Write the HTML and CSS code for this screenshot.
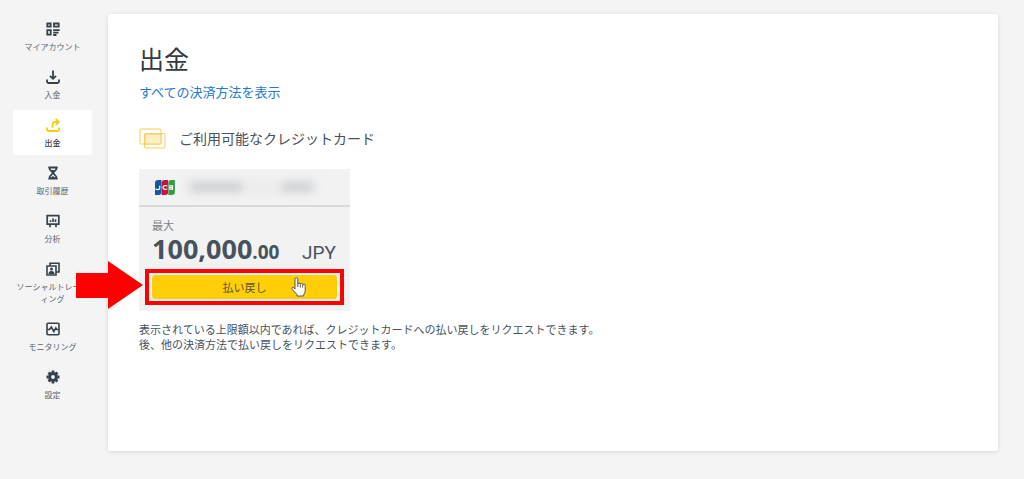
FILE: index.html
```html
<!DOCTYPE html>
<html lang="ja">
<head>
    <meta charset="UTF-8">
    <meta name="viewport" content="width=device-width, initial-scale=1.0">
    <title>出金</title>
    <link rel="stylesheet" href="styles.css">
</head>
<body>
<nav class="sidebar">
    <a class="nav-item" href="#">
        <svg class="nav-icon" viewBox="0 0 14 14" fill="none" stroke="currentColor" stroke-width="1.800">
            <path d="M1.300 1.500h3.400v3.200H1.300zM8 1.500h4.700v3.200H8zM1.300 8.200h3.400v4.400H1.300zM7.200 8.200h6.500M7.200 10.600h5.300M7.200 13h3.300"/>
        </svg>
        <span>マイアカウント</span>
    </a>
    <a class="nav-item" href="#">
        <svg class="nav-icon" viewBox="0 0 14 14" fill="none" stroke="currentColor" stroke-width="1.800">
            <path d="M7 .5v8M4 5.800l3 3 3-3M1 9.500v2q0 1.500 1.500 1.500h9q1.500 0 1.500-1.500v-2"/>
        </svg>
        <span>入金</span>
    </a>
    <a class="nav-item active" href="#">
        <svg class="nav-icon" viewBox="0 0 14 14" fill="none" stroke="currentColor" stroke-width="1.800">
            <path d="M6.500 9.800V7q0-3 3-3h2.500M9.800 1L12.800 4 9.800 7M1 9.500v2q0 1.500 1.500 1.500h9q1.500 0 1.500-1.500v-2"/>
        </svg>
        <span>出金</span>
    </a>
    <a class="nav-item" href="#">
        <svg class="nav-icon" viewBox="0 0 14 14" fill="none" stroke="currentColor" stroke-width="1.800">
            <path d="M2.300 1.500h9.400M2.300 12.700h9.400M3.800 1.500v2L7 7l3.200-3.500v-2M3.800 12.500v-2L7 7l3.200 3.500v2"/>
            <path d="M5 4h4L7 6.500zM4.500 12L7 10 9.500 12z" fill="currentColor" stroke="none"/>
        </svg>
        <span>取引履歴</span>
    </a>
    <a class="nav-item" href="#">
        <svg class="nav-icon" viewBox="0 0 14 14" fill="none" stroke="currentColor" stroke-width="1.700">
            <path d="M1.200 1.700h11.600v8.500H1.200zM4 10v3.300M10 10v3.300M4.500 6.200V8M7 4.500V8M9.500 5.200V8"/>
        </svg>
        <span>分析</span>
    </a>
    <a class="nav-item" href="#">
        <svg class="nav-icon" viewBox="0 0 14 14" fill="none" stroke="currentColor" stroke-width="1.600">
            <path d="M4 3.500V1.200h9v8.800h-2.300M1 4h9v9H1z"/>
            <circle cx="5.500" cy="7" r="1.500" fill="currentColor" stroke="none"/>
            <path d="M2.500 12q0-3 3-3t3 3z" fill="currentColor" stroke="none"/>
        </svg>
        <span>ソーシャルトレーディング</span>
    </a>
    <a class="nav-item" href="#">
        <svg class="nav-icon" viewBox="0 0 14 14" fill="none" stroke="currentColor" stroke-width="1.600">
            <rect x="1" y="1.300" width="12" height="11.500" rx="1"/>
            <path d="M1.500 7.500h2L5.300 5l2.500 4.500 2-3.500 1 1.500h2"/>
        </svg>
        <span>モニタリング</span>
    </a>
    <a class="nav-item" href="#">
        <svg class="nav-icon" viewBox="0 0 14 14" fill="none" stroke="currentColor">
            <circle cx="7" cy="7" r="3.400" stroke-width="3"/>
            <path d="M7 .5v2M7 11.500v2M.5 7h2M11.500 7h2M2.600 2.600l1.400 1.400M10 10l1.400 1.400M11.400 2.600L10 4M4 10l-1.400 1.400" stroke-width="2.800"/>
        </svg>
        <span>設定</span>
    </a>
</nav>

<main class="content">
    <h1>出金</h1>
    <a class="all-methods" href="#">すべての決済方法を表示</a>

    <h2>
        <svg class="cards-icon" viewBox="0 0 27 21" fill="none" stroke="#f5cf5a">
            <rect x="1" y="1" width="21" height="15" rx="1"/>
            <rect x="5.500" y="5.500" width="20.500" height="14.500" rx="1"/>
            <path d="M6 6h16v10H6z" fill="#fff0c4"/>
        </svg>
        ご利用可能なクレジットカード
    </h2>

    <section class="card">
        <div class="card-header">
            <svg class="jcb" viewBox="0 0 20 15" role="img" aria-label="JCB">
                <path d="M3 0h3.500v12q0 3-3 3H0V3q0-3 3-3z" fill="#16589f"/>
                <path d="M9.700 0h3.500v12q0 3-3 3H6.700V3q0-3 3-3z" fill="#c8123f"/>
                <path d="M16.400 0h3.500v12q0 3-3 3h-3.500V3q0-3 3-3z" fill="#2f9e41"/>
                <path d="M.5 9.200q4.200 1 4.200-1V5.800M12.500 6q-4.500-1-4.500 1.500t4.500 1.500M14 5.800h3.500v3.400H14M14 7.500h4" fill="none" stroke="#fff" stroke-width="1.200"/>
            </svg>
            <div class="card-number">
                <span class="number-start"></span>
                <span class="number-end"></span>
            </div>
        </div>
        <div class="card-body">
            <div class="label">最大</div>
            <div class="amount">
                <strong>100,000<small>.00</small></strong>
                <span class="currency">JPY</span>
            </div>
            <div class="refund">
                <button type="button">払い戻し</button>
                <div class="frame"></div>
                <svg class="arrow" viewBox="0 0 67 48" fill="#f00">
                    <path d="M0 12h32V0l35 24-35 24V37H0z"/>
                </svg>
                <svg class="pointer" viewBox="0 0 15 20" fill="#fff" stroke="#555" stroke-linejoin="round">
                    <path d="M4 12V2.200q0-1.400 1.400-1.400t1.400 1.400V7q0-1 1.200-1T9.300 7v.3q0-.8 1.200-.8t1.200 1v.4q0-.8 1.200-.8T14.200 8.300V14q0 2-1.500 3.500v1.500H6v-1.500L1.300 12.500q-.8-1.500.1-2t1.700.4z"/>
                    <path d="M6.800 7v3M9.300 7.500V10.500M11.700 8v2.500" fill="none"/>
                </svg>
            </div>
        </div>
    </section>

    <p>表示されている上限額以内であれば、クレジットカードへの払い戻しをリクエストできます。<br>後、他の決済方法で払い戻しをリクエストできます。</p>
</main>
</body>
</html>
```
FILE: styles.css
```css
* {
    box-sizing: border-box;
}
body {
    display: flex;
    gap: 16px;
    min-height: 100vh;
    margin: 0;
    padding: 14px 26px 28px 13px;
    background-color: #f4f4f4;
    color: #46525d;
    font-family: "Noto Sans CJK JP", sans-serif;
}
.sidebar {
    display: flex;
    flex-direction: column;
    flex: 0 0 79px;
    gap: 3px;
}
.nav-item {
    display: flex;
    flex-direction: column;
    align-items: center;
    gap: 5px;
    padding: 8px 2px 6px;
    border-radius: 2px;
    color: #34414d;
    font-size: 8px;
    line-height: 12px;
    text-align: center;
    text-decoration: none;
    line-break: anywhere;
}
.nav-item span {
    color: #59636c;
}
.nav-item.active {
    background-color: #fff;
    color: #fbcb12;
}
.nav-item.active span {
    color: #34414d;
    font-weight: 500;
}
.nav-icon {
    width: 14px;
    height: 14px;
}
.content {
    flex: 1;
    min-width: 0;
    padding: 26px 31px;
    background-color: #fff;
    border-radius: 2px;
    box-shadow: 0 1px 5px rgba(0, 0, 0, 0.12);
}
h1 {
    margin: 0;
    color: #333b41;
    font-size: 25px;
    font-weight: 400;
    line-height: 36px;
}
.all-methods {
    display: block;
    margin-top: 6px;
    color: #2678cf;
    font-size: 13px;
    line-height: 20px;
    text-decoration: none;
}
h2 {
    display: flex;
    align-items: center;
    gap: 13px;
    margin: 26px 0 20px;
    font-size: 14px;
    font-weight: 400;
    line-height: 21px;
}
.cards-icon {
    width: 27px;
    height: 21px;
}
.card {
    width: 211px;
    background-color: #f2f2f2;
}
.card-header {
    display: flex;
    align-items: center;
    gap: 10px;
    height: 38px;
    padding: 0 32px 0 16px;
    border-bottom: 2px solid #d8d9da;
}
.jcb {
    width: 20px;
    height: 15px;
}
.card-number {
    display: flex;
    flex: 1;
    gap: 40px;
    height: 16px;
    padding: 3px 6px;
    background-color: #ececed;
    filter: blur(4px);
}
.card-number span {
    background-color: #cdd0d2;
}
.number-start {
    flex: 5;
}
.number-end {
    flex: 3;
}
.card-body {
    padding: 10px 13px 12px;
}
.label {
    color: #7b8389;
    font-size: 11px;
    line-height: 16px;
}
.amount {
    display: flex;
    align-items: baseline;
    justify-content: space-between;
    padding-right: 1px;
    line-height: 32px;
}
.amount strong {
    font-family: "Open Sans", sans-serif;
    font-size: 27px;
}
.amount small {
    font-size: 19px;
}
.currency {
    font-family: Roboto, sans-serif;
    font-size: 19px;
}
.refund {
    position: relative;
    margin-top: 6px;
}
.refund button {
    display: block;
    width: 100%;
    height: 24px;
    padding: 0;
    border: none;
    border-radius: 3px;
    background-color: #ffce07;
    color: #59553f;
    font-family: inherit;
    font-size: 11px;
    line-height: 22px;
    cursor: pointer;
}
.frame {
    position: absolute;
    inset: -6px -7px;
    border: 4px solid #f00;
    pointer-events: none;
}
.arrow {
    position: absolute;
    top: -14px;
    left: -76px;
    width: 67px;
    height: 48px;
}
.pointer {
    position: absolute;
    top: 2px;
    right: 31px;
    width: 15px;
    height: 20px;
}
p {
    margin: 11px 0 0;
    font-size: 11px;
    line-height: 15px;
}
```
